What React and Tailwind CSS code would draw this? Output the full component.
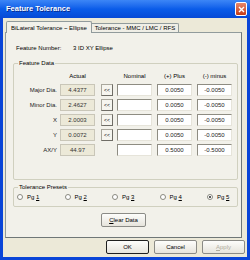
import React from 'react';

const rows = [
  { label: 'Major Dia.', actual: '4.4377', plus: '0.0050', minus: '-0.0050', pick: true },
  { label: 'Minor Dia.', actual: '2.4627', plus: '0.0050', minus: '-0.0050', pick: true },
  { label: 'X', actual: '2.0003', plus: '0.0050', minus: '-0.0050', pick: true },
  { label: 'Y', actual: '0.0072', plus: '0.0050', minus: '-0.0050', pick: true },
  { label: 'AX/Y', actual: '44.97', plus: '0.5000', minus: '-0.5000', pick: false },
];

function Edit({ value }) {
  return (
    <div className="w-[35px] h-[12px] bg-white border border-[#8e8c82] border-r-[#e6e4da] border-b-[#e6e4da] flex items-center justify-center text-[#222]">
      {value}
    </div>
  );
}

function Radio({ label, digit, checked, last }) {
  return (
    <div className={(last ? '' : 'w-[47.5px] ') + 'flex items-center'}>
      <div className="w-[6px] h-[6px] rounded-full border border-[#8a8a80] bg-white flex items-center justify-center">
        {checked && <div className="w-[2px] h-[2px] rounded-full bg-[#222]" />}
      </div>
      <span className="ml-[4px]">
        {label} <span className="underline">{digit}</span>
      </span>
    </div>
  );
}

function Button({ children, primary, disabled, className = '' }) {
  return (
    <div
      className={
        'h-[14px] flex items-center justify-center rounded-[2px] bg-gradient-to-b from-[#fdfdfb] to-[#e6e4dc] ' +
        (primary ? 'border border-[#1f1f1f] ' : 'border border-[#8b8b86] ') +
        (disabled ? 'text-[#b0ad9f] ' : 'text-black ') +
        className
      }
    >
      {children}
    </div>
  );
}

export default function App() {
  return (
    <div className="w-[250px] h-[260px] flex flex-col overflow-hidden bg-[#0a45d8] text-[6px] leading-[8px] text-black font-['Liberation_Sans',Arial,sans-serif]">
      {/* title bar */}
      <div className="h-[18px] flex items-center justify-between pl-[6px] pr-[3px] bg-gradient-to-b from-[#3c86f6] via-[#0a5ce9] to-[#0649d6]">
        <span className="text-white font-bold text-[7.5px] [text-shadow:1px_1px_0_#0a2a8a]">Feature Tolerance</span>
        <div className="w-[12px] h-[14px] rounded-[2px] border border-white bg-gradient-to-b from-[#e8866a] to-[#c53a12] flex items-center justify-center">
          <svg width="7" height="7" viewBox="0 0 7 7">
            <path d="M1 1L6 6M6 1L1 6" stroke="white" strokeWidth="1.4" />
          </svg>
        </div>
      </div>

      {/* client */}
      <div className="flex-1 mx-[3px] mb-[3px] bg-[#ece9d8] flex flex-col">
        {/* tabs */}
        <div className="relative z-10 mt-[3px] ml-[3px] h-[12px] flex items-end">
          <div className="h-[12px] px-[4px] flex items-center bg-[#f2f1ea] border border-b-0 border-[#919b9c] rounded-t-[2px]">
            BiLateral Tolerance ~ Ellipse
          </div>
          <div className="h-[9px] mb-[1px] px-[3px] flex items-center bg-[#efeee6] border border-b-0 border-l-0 border-[#919b9c] rounded-tr-[2px]">
            Tolerance - MMC / LMC / RFS
          </div>
        </div>

        {/* tab page */}
        <div className="-mt-[1px] ml-[2px] w-[237px] h-[206px] bg-[#f2f1ea] border border-[#919b9c] border-r-[#6f7777] border-b-[#6f7777] flex flex-col">
          <div className="mt-[11px] pl-[10px] flex">
            <span className="w-[57px]">Feature Number:</span>
            <span>3 ID XY Ellipse</span>
          </div>

          <fieldset className="mt-[7px] ml-[7px] w-[225px] min-w-0 border border-[#d0d0bf] rounded-[2px] pb-[23px]">
            <legend className="ml-[4px] px-[1px]">Feature Data</legend>
            <div className="pt-[5px] flex">
              <div className="w-[43px]" />
              <div className="ml-[3px] w-[35px] text-center">Actual</div>
              <div className="ml-[6px] w-[12px]" />
              <div className="ml-[4px] w-[35px] text-center">Nominal</div>
              <div className="ml-[5px] w-[35px] text-center">(+) Plus</div>
              <div className="ml-[5px] w-[35px] text-center">(-) minus</div>
            </div>
            <div className="mt-[4px] flex flex-col gap-[3px]">
              {rows.map((r) => (
                <div key={r.label} className="h-[12px] flex items-center">
                  <div className="w-[43px] text-right text-[#222]">{r.label}</div>
                  <div className="ml-[3px] w-[35px] h-[12px] border border-[#c9c6b8] bg-[#ece9d8] flex items-center justify-center text-[#333]">
                    {r.actual}
                  </div>
                  <div className="ml-[6px] w-[12px] h-[12px]">
                    {r.pick && (
                      <div className="w-[12px] h-[12px] border border-[#a9a79c] border-r-[#6f6d66] border-b-[#6f6d66] bg-[#f6f5ef] flex items-center justify-center text-[5px]">
                        &lt;&lt;
                      </div>
                    )}
                  </div>
                  <div className="ml-[4px]"><Edit value="" /></div>
                  <div className="ml-[5px]"><Edit value={r.plus} /></div>
                  <div className="ml-[5px]"><Edit value={r.minus} /></div>
                </div>
              ))}
            </div>
          </fieldset>

          <fieldset className="mt-[3px] ml-[7px] w-[225px] min-w-0 border border-[#d0d0bf] rounded-[2px] pb-[5px]">
            <legend className="ml-[4px] px-[1px]">Tolerance Presets</legend>
            <div className="pt-[2px] pl-[3px] flex">
              <Radio label="Pg" digit="1" />
              <Radio label="Pg" digit="2" />
              <Radio label="Pg" digit="3" />
              <Radio label="Pg" digit="4" />
              <Radio label="Pg" digit="5" checked last />
            </div>
          </fieldset>

          <div className="mt-[6px] flex justify-center">
            <Button className="w-[45px]">
              <span><span className="underline">C</span>lear Data</span>
            </Button>
          </div>
        </div>

        {/* dialog buttons */}
        <div className="mt-[2px] mr-[2px] flex justify-end gap-[5px]">
          <Button primary className="w-[43px]">OK</Button>
          <Button className="w-[43px]">Cancel</Button>
          <Button disabled className="w-[43px]">
            <span><span className="underline">A</span>pply</span>
          </Button>
        </div>
      </div>
    </div>
  );
}
